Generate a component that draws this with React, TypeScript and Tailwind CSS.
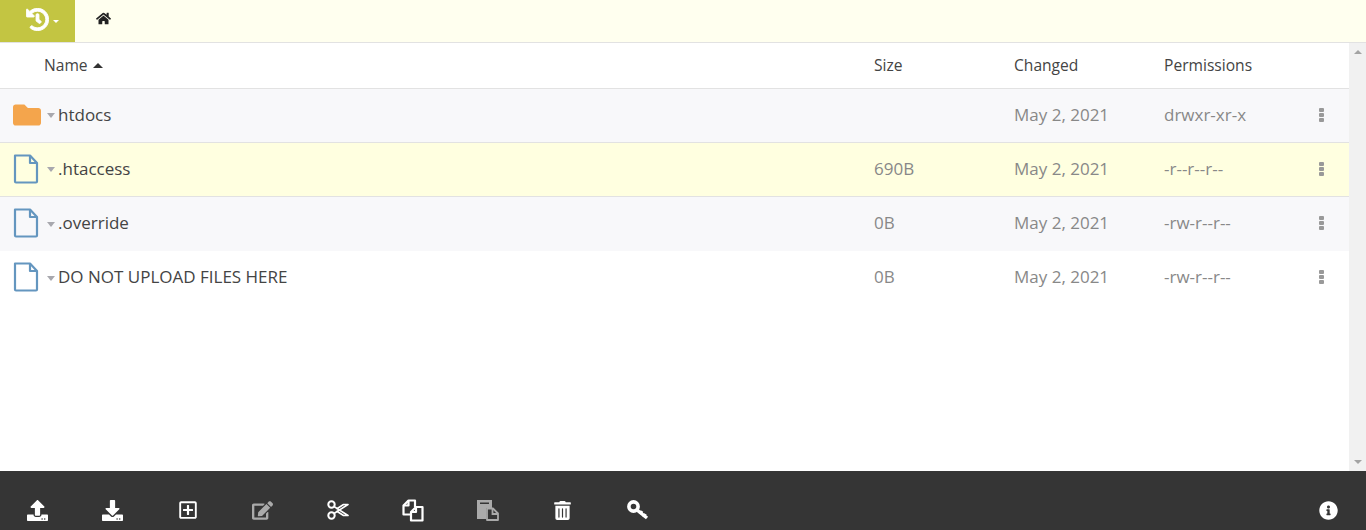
import {
    FaDownload,
    FaEdit,
    FaFolder,
    FaHistory,
    FaHome,
    FaInfoCircle,
    FaRegPlusSquare,
    FaTrashAlt,
    FaUpload,
} from "react-icons/fa";

const files = [
    {name: "htdocs", folder: true, size: "", changed: "May 2, 2021", perms: "drwxr-xr-x", rowClass: "bg-[#f8f8fa] border-b border-[#e2e2e2]"},
    {name: ".htaccess", folder: false, size: "690B", changed: "May 2, 2021", perms: "-r--r--r--", rowClass: "bg-[#ffffe0] border-b border-[#e2e2e2]"},
    {name: ".override", folder: false, size: "0B", changed: "May 2, 2021", perms: "-rw-r--r--", rowClass: "bg-[#f8f8fa]"},
    {name: "DO NOT UPLOAD FILES HERE", folder: false, size: "0B", changed: "May 2, 2021", perms: "-rw-r--r--", rowClass: "bg-white"},
];

const FileIcon = () => (
    <svg width="26" height="30" viewBox="0 0 26 30" fill="none" stroke="#6496bf" strokeWidth="2.2" strokeLinejoin="round">
        <path d="M2 1.5h15l7 7.5v18.5a1 1 0 0 1-1 1H3a1 1 0 0 1-1-1z" />
        <path d="M17 1.5V9h7" />
    </svg>
);

const ScissorsIcon = () => (
    <svg width="22" height="20" viewBox="0 0 22 20" fill="none" stroke="currentColor" strokeWidth="2" strokeLinejoin="round">
        <circle cx="4.5" cy="4.5" r="3.2" />
        <circle cx="4.5" cy="15.5" r="3.2" />
        <path d="M7 6.5 21 15.5 16.5 15.5 9.5 11" strokeWidth="1.6" />
        <path d="M7 13.5 21 4.5 16.5 4.5 9.5 9" strokeWidth="1.6" />
    </svg>
);

const CopyIcon = () => (
    <svg width="22" height="23" viewBox="0 0 22 23" fill="none" stroke="currentColor" strokeWidth="2.2" strokeLinejoin="round">
        <path d="M13 8V1.5H6.5L1.5 6.5V15.5H9" />
        <path d="M6.5 1.5V6.5H1.5" />
        <path d="M20.5 8H14L9 13V21.5H20.5z" />
        <path d="M14 8V13H9" />
    </svg>
);

const PasteIcon = () => (
    <svg width="23" height="22" viewBox="0 0 23 22" fill="currentColor">
        <path d="M1 1h15v8h-6v11H1z" />
        <path d="M4 3.5h9v1.5H4z" fill="#353535" />
        <path d="M11 9.5h6l5 5v6.5H11z" fill="none" stroke="currentColor" strokeWidth="1.8" strokeLinejoin="round" />
        <path d="M16.5 9.5v5.5H22" fill="none" stroke="currentColor" strokeWidth="1.8" />
    </svg>
);

const KeyIcon = () => (
    <svg width="22" height="20" viewBox="0 0 22 20" fill="none" stroke="currentColor">
        <circle cx="6.5" cy="6.5" r="4.6" strokeWidth="3.6" />
        <path d="M10 10 20 18" strokeWidth="3.4" />
        <path d="M15 11 13 14M18.5 14 16.5 17" strokeWidth="3" />
    </svg>
);

const RowMenu = () => (
    <div className="flex flex-col gap-px">
        <span className="w-[5px] h-[4px] rounded-[1px] bg-[#999]"></span>
        <span className="w-[5px] h-[4px] rounded-[1px] bg-[#999]"></span>
        <span className="w-[5px] h-[4px] rounded-[1px] bg-[#999]"></span>
    </div>
);

const App = () => {
    return (
        <div className="w-[1366px] h-[530px] flex flex-col overflow-hidden bg-white font-['Open_Sans',sans-serif]">
            <div className="h-[43px] shrink-0 flex bg-[#ffffef] border-b border-[#e2e2e2]">
                <div className="w-[75px] h-[42px] bg-[#c3c542] flex items-center pl-[26px] pb-[4px] text-white gap-[4px]">
                    <FaHistory size={23} stroke="currentColor" strokeWidth={20} />
                    <span className="w-0 h-0 mt-[5px] border-x-[3px] border-x-transparent border-t-[3px] border-t-white"></span>
                </div>
                <div className="pl-[21px] pb-[5px] flex items-center text-[#222]">
                    <FaHome size={15} />
                </div>
            </div>

            <div className="flex-1 flex min-h-0">
                <div className="flex-1 min-w-0">
                    <div className="h-[46px] flex items-center border-b border-[#e2e2e2] text-[15.6px] text-[#444] font-medium">
                        <div className="w-[874px] pl-[44px] flex items-center gap-[5px]">
                            Name
                            <span className="w-0 h-0 border-x-[5px] border-x-transparent border-b-[5px] border-b-[#333]"></span>
                        </div>
                        <div className="w-[140px]">Size</div>
                        <div className="w-[150px]">Changed</div>
                        <div>Permissions</div>
                    </div>
                    {files.map((file) => (
                        <div key={file.name} className={`h-[54px] pb-[2px] flex items-center text-[17px] text-[#888] ${file.rowClass}`}>
                            <div className="w-[874px] flex items-center">
                                <div className="w-[47px] flex pl-[13px]">
                                    {file.folder ? <FaFolder size={28} className="text-[#f4a54c]" /> : <FileIcon />}
                                </div>
                                <span className="w-0 h-0 mt-[2px] border-x-[4px] border-x-transparent border-t-[5px] border-t-[#a8a8ae]"></span>
                                <span className="text-[#444] ml-[3px]">{file.name}</span>
                            </div>
                            <div className="w-[140px]">{file.size}</div>
                            <div className="w-[150px]">{file.changed}</div>
                            <div className="w-[155px]">{file.perms}</div>
                            <RowMenu />
                        </div>
                    ))}
                </div>
                <div className="w-[17px] bg-[#f1f1f1] flex flex-col justify-between items-center py-[7px]">
                    <span className="w-0 h-0 border-x-[4px] border-x-transparent border-b-[4px] border-b-[#a3a3a3]"></span>
                    <span className="w-0 h-0 border-x-[4px] border-x-transparent border-t-[4px] border-t-[#a3a3a3]"></span>
                </div>
            </div>

            <div className="h-[59px] shrink-0 bg-[#353535] flex items-center text-white pt-[19px]">
                <div className="w-[75px] flex justify-center"><FaUpload size={21} /></div>
                <div className="w-[75px] flex justify-center"><FaDownload size={21} /></div>
                <div className="w-[75px] flex justify-center"><FaRegPlusSquare size={20} /></div>
                <div className="w-[75px] flex justify-center text-[#aaa]"><FaEdit size={21} /></div>
                <div className="w-[75px] flex justify-center"><ScissorsIcon /></div>
                <div className="w-[75px] flex justify-center"><CopyIcon /></div>
                <div className="w-[75px] flex justify-center text-[#aaa]"><PasteIcon /></div>
                <div className="w-[75px] flex justify-center"><FaTrashAlt size={19} /></div>
                <div className="w-[75px] flex justify-center"><KeyIcon /></div>
                <div className="ml-auto mr-[28px]"><FaInfoCircle size={19} /></div>
            </div>
        </div>
    );
};

export default App;
